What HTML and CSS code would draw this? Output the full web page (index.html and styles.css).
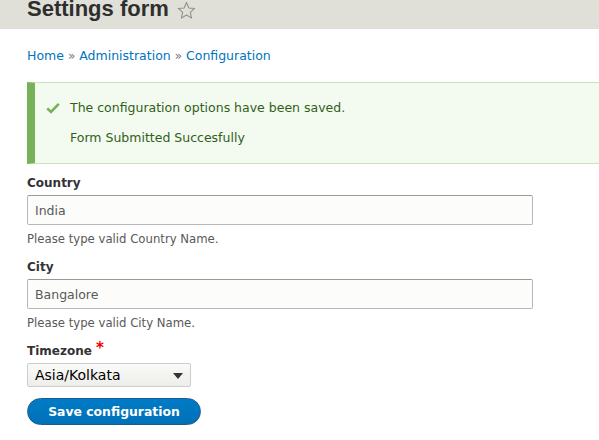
FILE: index.html
```html
<!DOCTYPE html>
<html>
<head>
<meta charset="utf-8">
<link rel="stylesheet" href="styles.css">
</head>
<body>
<header class="page-head">
  <h1 class="title">Settings form <svg class="star" width="19" height="19" viewBox="0 0 20 20"><polygon points="10,1.5 12.5,7.3 18.6,7.8 14,11.9 15.4,18 10,14.8 4.6,18 6,11.9 1.4,7.8 7.5,7.3" fill="none" stroke="#8e8e86" stroke-width="1.1" stroke-linejoin="round"/></svg></h1>
</header>
<main class="content">
  <nav class="breadcrumb"><a href="#">Home</a> <span class="sep">»</span> <a href="#">Administration</a> <span class="sep">»</span> <a href="#">Configuration</a></nav>
  <div class="messages">
    <div class="msg-line"><svg class="check" width="14" height="12" viewBox="0 0 14 12"><path d="M1.2 6.4 L5 10 L12.8 1.8" fill="none" stroke="#77b259" stroke-width="2.6"/></svg><span>The configuration options have been saved.</span></div>
    <div class="msg-line plain"><span>Form Submitted Succesfully</span></div>
  </div>
  <form class="form">
    <div class="item">
      <label class="label">Country</label>
      <input class="text" type="text" value="India">
      <div class="desc">Please type valid Country Name.</div>
    </div>
    <div class="item">
      <label class="label">City</label>
      <input class="text" type="text" value="Bangalore">
      <div class="desc">Please type valid City Name.</div>
    </div>
    <div class="item">
      <label class="label">Timezone <span class="req">*</span></label>
      <div class="select"><span>Asia/Kolkata</span><span class="arrow"></span></div>
    </div>
    <div class="actions"><button class="button" type="button">Save configuration</button></div>
  </form>
</main>
</body>
</html>
```
FILE: styles.css
```css
html, body { margin: 0; padding: 0; background: #fff; }
body { font-family: "DejaVu Sans", Verdana, sans-serif; color: #333; font-size: 12px; overflow: hidden; }
.page-head { background: #e0e0d8; height: 29px; overflow: hidden; padding-left: 27px; }
.title { margin: -7px 0 0; font-family: "Liberation Sans", Arial, sans-serif; font-size: 22px; font-weight: bold; line-height: 32px; color: #2e2e2e; display: flex; align-items: center; gap: 8px; }
.star { margin-top: 3px; }
.content { padding: 0 0 0 27px; }
.breadcrumb { margin-top: 18px; font-size: 12.5px; line-height: 18px; color: #666; }
.breadcrumb a { color: #0074bd; text-decoration: none; }
.breadcrumb .sep { color: #777; font-size: 12px; }
.messages { margin-top: 17px; background: #f3faef; border: 1px solid #c9e1bd; border-left: 8px solid #77b259; border-right: none; height: 82px; box-sizing: border-box; padding: 15px 0 0 11px; color: #325e1c; font-size: 12.5px; }
.msg-line { display: flex; align-items: center; height: 19px; }
.msg-line.plain { margin-top: 11px; padding-left: 24px; }
.check { margin-right: 10px; }
.form { margin-top: 11px; }
.item { margin-bottom: 12px; }
.label { display: block; font-weight: bold; font-size: 12px; line-height: 17px; color: #333; margin-bottom: 3px; }
.req { color: #e00; font-size: 15px; position: relative; top: -2px; }
.text { display: block; width: 506px; height: 30px; box-sizing: border-box; border: 1px solid #b8b8b8; border-top-color: #999; border-radius: 2px; background: #fcfcfa; font-family: inherit; font-size: 12.5px; color: #595959; padding: 0 7px; margin: 0; outline: none; }
.desc { margin-top: 6px; font-size: 11.7px; line-height: 16px; color: #595959; }
.item + .item + .item { margin-top: -1px; }
.select { width: 164px; height: 24px; box-sizing: border-box; border: 1px solid #ccc; border-radius: 2px; background: linear-gradient(#fafaf8, #ededea); display: flex; align-items: center; justify-content: space-between; padding: 0 7px 0 7px; font-size: 14px; color: #000; }
.arrow { width: 0; height: 0; border-left: 5px solid transparent; border-right: 5px solid transparent; border-top: 6px solid #333; margin-top: 2px; }
.actions { margin-top: -1px; }
.button { width: 174px; height: 27px; border-radius: 14px; border: 1px solid #1e5c90; background: linear-gradient(#007bc6, #0071b8); color: #fff; font-family: inherit; font-weight: bold; font-size: 12.4px; padding: 0; }
```
